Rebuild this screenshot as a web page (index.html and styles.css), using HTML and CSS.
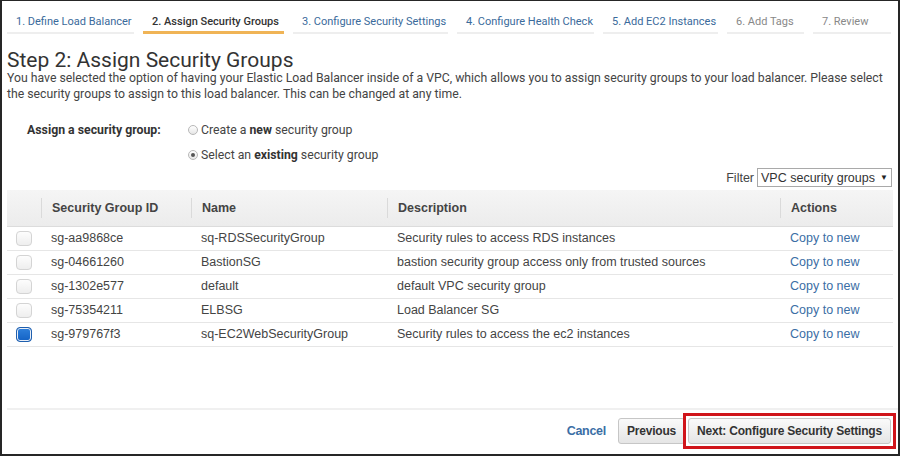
FILE: index.html
```html
<!DOCTYPE html>
<html>
<head>
<meta charset="utf-8">
<link rel="stylesheet" href="styles.css">
</head>
<body>
<div class="frame">
  <ul class="tabs">
    <li class="tab t1">1. Define Load Balancer</li>
    <li class="tab t2 active">2. Assign Security Groups</li>
    <li class="tab t3">3. Configure Security Settings</li>
    <li class="tab t4">4. Configure Health Check</li>
    <li class="tab t5">5. Add EC2 Instances</li>
    <li class="tab t6 disabled">6. Add Tags</li>
    <li class="tab t7 disabled">7. Review</li>
  </ul>

  <h1 class="title">Step 2: Assign Security Groups</h1>
  <p class="intro">You have selected the option of having your Elastic Load Balancer inside of a VPC, which allows you to assign security groups to your load balancer. Please select the security groups to assign to this load balancer. This can be changed at any time.</p>

  <div class="assign">
    <div class="assign-label">Assign a security group:</div>
    <div class="radios">
      <label class="radio"><span class="dot"></span>Create a <b>new</b> security group</label>
      <label class="radio"><span class="dot on"></span>Select an <b>existing</b> security group</label>
    </div>
  </div>

  <div class="filter">
    <span class="filter-label">Filter</span>
    <div class="select">VPC security groups <span class="caret">▼</span></div>
  </div>

  <table class="grid">
    <thead>
      <tr>
        <th class="c-check"></th>
        <th class="c-id"><span>Security Group ID</span></th>
        <th class="c-name"><span>Name</span></th>
        <th class="c-desc"><span>Description</span></th>
        <th class="c-act"><span>Actions</span></th>
      </tr>
    </thead>
    <tbody>
      <tr>
        <td class="c-check"><span class="box"></span></td>
        <td>sg-aa9868ce</td>
        <td>sq-RDSSecurityGroup</td>
        <td>Security rules to access RDS instances</td>
        <td><a class="link">Copy to new</a></td>
      </tr>
      <tr>
        <td class="c-check"><span class="box"></span></td>
        <td>sg-04661260</td>
        <td>BastionSG</td>
        <td>bastion security group access only from trusted sources</td>
        <td><a class="link">Copy to new</a></td>
      </tr>
      <tr>
        <td class="c-check"><span class="box"></span></td>
        <td>sg-1302e577</td>
        <td>default</td>
        <td>default VPC security group</td>
        <td><a class="link">Copy to new</a></td>
      </tr>
      <tr>
        <td class="c-check"><span class="box"></span></td>
        <td>sg-75354211</td>
        <td>ELBSG</td>
        <td>Load Balancer SG</td>
        <td><a class="link">Copy to new</a></td>
      </tr>
      <tr>
        <td class="c-check"><span class="box checked"></span></td>
        <td>sg-979767f3</td>
        <td>sq-EC2WebSecurityGroup</td>
        <td>Security rules to access the ec2 instances</td>
        <td><a class="link">Copy to new</a></td>
      </tr>
    </tbody>
  </table>

  <div class="spacer"></div>

  <div class="footer">
    <a class="cancel">Cancel</a>
    <button class="btn prev">Previous</button>
    <div class="highlight"><button class="btn next">Next: Configure Security Settings</button></div>
  </div>
</div>
</body>
</html>
```

FILE: styles.css
```css
* { box-sizing: border-box; }
html, body { margin: 0; padding: 0; background: #fff; }
body { width: 900px; height: 456px; overflow: hidden; }

.frame {
  width: 900px;
  height: 456px;
  border: 2px solid #262626;
  border-top-width: 1px;
  padding: 0 0 0 5px;
  display: flex;
  flex-direction: column;
  font-family: Roboto, "Liberation Sans", sans-serif;
  color: #444;
}

.tabs {
  list-style: none;
  margin: 0;
  padding: 12px 0 0 0;
  display: flex;
  gap: 9px;
}
.tab {
  font-size: 11px;
  height: 21px;
  line-height: 18px;
  padding: 0 0 0 9px;
  color: #3a6a9b;
  border-bottom: 2px solid #eeeeee;
  white-space: nowrap;
  overflow: hidden;
}
.tab.active { color: #333; font-weight: 500; border-bottom: 3px solid #f0b456; }
.tab.disabled { color: #888; }
.t1 { width: 127px; }
.t2 { width: 141px; }
.t3 { width: 155px; }
.t4 { width: 137px; }
.t5 { width: 115px; }
.t6 { width: 77px; }
.t7 { width: 78px; }

.title {
  margin: 17px 0 0 0;
  font-size: 21px;
  font-weight: 400;
  line-height: 19px;
  color: #333;
}
.intro {
  margin: 0;
  font-size: 12.25px;
  line-height: 16px;
  color: #444;
  padding-right: 0;
}

.assign {
  display: flex;
  margin-top: 19px;
  padding-left: 20px;
}
.assign-label {
  width: 161px;
  font-size: 12.3px;
  font-weight: 700;
  color: #333;
  line-height: 18px;
}
.radios { display: flex; flex-direction: column; gap: 7px; }
.radio {
  display: flex;
  align-items: center;
  font-size: 12.25px;
  line-height: 18px;
  color: #444;
  white-space: pre;
}
.radio b { font-weight: 700; color: #333; }
.dot {
  width: 10px; height: 10px;
  border-radius: 50%;
  border: 1px solid #b8b8b8;
  background: linear-gradient(#fff, #e6e6e6);
  margin-right: 3px;
  position: relative;
}
.dot.on::after {
  content: "";
  position: absolute;
  left: 2px; top: 2px;
  width: 4px; height: 4px;
  border-radius: 50%;
  background: #555;
}

.filter {
  display: flex;
  justify-content: flex-end;
  align-items: center;
  padding-right: 6px;
  margin-top: 4px;
  gap: 3px;
  font-family: "Liberation Sans", Arial, sans-serif;
  font-size: 12.5px;
  color: #444;
}
.select {
  width: 135px;
  height: 19px;
  border: 1px solid #a9a9a9;
  padding: 0 3px;
  display: flex;
  justify-content: space-between;
  align-items: center;
  color: #333;
  font-size: 12.5px;
}
.caret { font-size: 8px; color: #222; }

.grid {
  margin-top: 3px;
  width: 886px;
  border-collapse: collapse;
  font-family: "Liberation Sans", Arial, sans-serif;
  font-size: 12.5px;
  color: #444;
}
.grid th {
  height: 36px;
  background: linear-gradient(#f5f5f5, #ececec);
  text-align: left;
  font-weight: 700;
  color: #444;
  padding: 0;
  border-bottom: 1px solid #dcdcdc;
}
.grid th span {
  display: block;
  border-left: 1px solid #dadada;
  padding-left: 10px;
  line-height: 20px;
}
.grid td {
  height: 24px;
  padding: 0 0 0 10px;
  border-bottom: 1px solid #e6e6e6;
  white-space: nowrap;
}
.grid td.c-check { padding: 0 0 0 9px; }
.c-check { width: 34px; }
.c-id { width: 150px; }
.c-name { width: 196px; }
.c-desc { width: 393px; }
.box {
  display: block;
  width: 16px; height: 15px;
  border: 1px solid #d4d4d4;
  border-radius: 4px;
  background: linear-gradient(#fdfdfd, #eeeeee);
}
.box.checked {
  border-color: #1f5fae;
  background: linear-gradient(#2e80dc, #1462c4);
  box-shadow: inset 0 0 0 1px #e9eef6;
}
.link { color: #3b6ea5; }

.spacer { flex: 1; }

.footer {
  border-top: 2px solid #f0f0f0;
  height: 46px;
  display: flex;
  justify-content: flex-end;
  align-items: center;
  padding-right: 2px;
  padding-bottom: 2px;
  font-family: "Liberation Sans", Arial, sans-serif;
}
.cancel {
  font-weight: 700;
  color: #3b6ea5;
  font-size: 12.5px;
  margin-right: 12px;
  letter-spacing: -0.3px;
}
.btn {
  font-family: "Liberation Sans", Arial, sans-serif;
  font-weight: 700;
  font-size: 12px;
  letter-spacing: -0.2px;
  color: #333;
  height: 26px;
  border: 1px solid #c6c6c6;
  border-radius: 3px;
  background: linear-gradient(#fafafa, #e5e5e5);
  padding: 0 8px;
  white-space: nowrap;
}
.highlight {
  border: 3px solid #d0141a;
  padding: 2px 2px;
  margin-left: -2px;
}
.next { width: 203px; }
```
